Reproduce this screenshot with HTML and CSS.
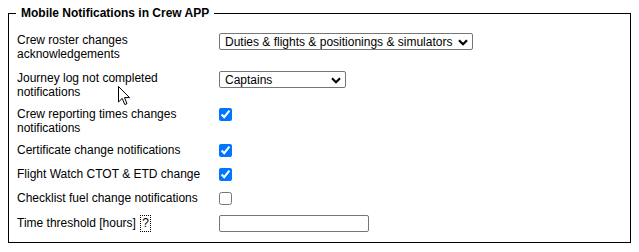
FILE: index.html
```html
<!DOCTYPE html>
<html>
<head>
    <title>Mobile Notifications in Crew APP</title>
    <link rel="stylesheet" href="styles.css">
</head>
<body>
    <fieldset class="group">
        <legend>Mobile Notifications in Crew APP</legend>

        <div class="row row-first">
            <label for="rosterAck">Crew roster changes acknowledgements</label>
            <span class="select-wrap">
                <select id="rosterAck" class="select-wide">
                    <option>Duties &amp; flights &amp; positionings &amp; simulators</option>
                    <option>Duties &amp; flights</option>
                    <option>None</option>
                </select>
                <svg class="chevron" width="10" height="7" viewBox="0 0 10 7"><path d="M1 1.2 L5 5.2 L9 1.2" fill="none" stroke="#000" stroke-width="2.2"/></svg>
            </span>
        </div>

        <div class="row">
            <label for="journeyLog">Journey log not completed notifications</label>
            <span class="select-wrap">
                <select id="journeyLog" class="select-narrow">
                    <option>Captains</option>
                    <option>All crew</option>
                    <option>None</option>
                </select>
                <svg class="chevron" width="10" height="7" viewBox="0 0 10 7"><path d="M1 1.2 L5 5.2 L9 1.2" fill="none" stroke="#000" stroke-width="2.2"/></svg>
            </span>
        </div>

        <div class="row">
            <label for="reportingTimes">Crew reporting times changes notifications</label>
            <div><input type="checkbox" id="reportingTimes" checked></div>
        </div>

        <div class="row">
            <label for="certificate">Certificate change notifications</label>
            <div><input type="checkbox" id="certificate" checked></div>
        </div>

        <div class="row">
            <label for="flightWatch">Flight Watch CTOT &amp; ETD change</label>
            <div><input type="checkbox" id="flightWatch" checked></div>
        </div>

        <div class="row">
            <label for="fuelChange">Checklist fuel change notifications</label>
            <div><input type="checkbox" id="fuelChange"></div>
        </div>

        <div class="row">
            <label for="threshold">Time threshold [hours] <span class="help" title="Hours before departure">?</span></label>
            <input type="text" id="threshold" class="text-input">
        </div>
    </fieldset>

    <svg class="cursor" width="13" height="20" viewBox="0 0 13 20">
        <path d="M0.5 0.5 L0.5 16 L4.2 12.4 L6.8 18.6 L9 17.6 L6.5 11.6 L11.5 11.6 Z" fill="#fff" stroke="#000" stroke-width="1" stroke-linejoin="round"/>
    </svg>
</body>
</html>
```

FILE: styles.css
```css
body {
    font-family: "Liberation Sans", Arial, sans-serif;
    font-size: 12px;
    color: #000;
    background-color: #fff;
    margin: 6px 8px;
}
.group {
    border: 1px solid #000;
    margin: 0;
    padding: 9px 8px 6px 8px;
}
.group legend {
    font-weight: bold;
    font-size: 12px;
    padding: 0 5px;
    margin-left: -1px;
}
.row {
    display: grid;
    grid-template-columns: 202px 1fr;
    align-items: start;
    padding: 4px 0;
}
.row-first {
    padding-bottom: 6px;
}
.row label {
    line-height: normal;
}
.select-wrap {
    position: relative;
    display: inline-block;
    justify-self: start;
    line-height: 0;
}
select {
    -webkit-appearance: none;
    appearance: none;
    font-family: "Liberation Sans", Arial, sans-serif;
    font-size: 12px;
    height: 17px;
    box-sizing: border-box;
    border: 1px solid #767676;
    border-radius: 2px;
    background-color: #fff;
    color: #000;
    padding: 0 18px 0 5px;
    margin: 0;
}
.select-wide {
    width: 254px;
}
.select-narrow {
    width: 127px;
}
.chevron {
    position: absolute;
    right: 5px;
    top: 6px;
    pointer-events: none;
}
input[type="checkbox"] {
    width: 13px;
    height: 13px;
    margin: 1px 0 2px 0;
    display: block;
}
.text-input {
    width: 150px;
    height: 17px;
    box-sizing: border-box;
    border: 1px solid #767676;
    border-radius: 2px;
    padding: 0 3px;
    margin: 0;
    font-family: "Liberation Sans", Arial, sans-serif;
    font-size: 12px;
}
.help {
    display: inline-block;
    border: 1px dotted #000;
    padding: 0 1px;
    line-height: 15px;
    margin-left: 1px;
    vertical-align: middle;
}
.cursor {
    position: absolute;
    left: 118px;
    top: 86px;
}
```
